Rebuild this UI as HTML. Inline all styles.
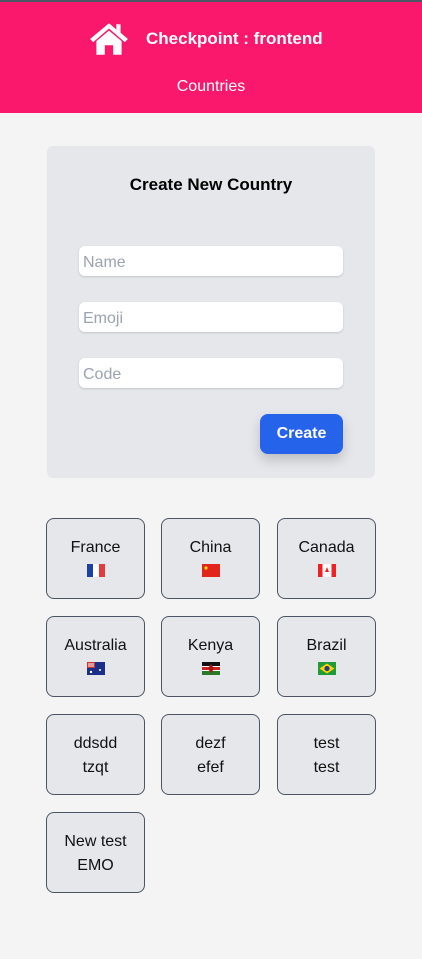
<!DOCTYPE html><html><head><style>
*{box-sizing:border-box;margin:0;padding:0}
body{width:422px;height:959px;background:#f4f4f5;font-family:"Liberation Sans",sans-serif;overflow:hidden;position:relative}
.hd{position:absolute;top:0;left:0;width:422px;height:113px;background:#f9186b;border-top:2px solid #4b5563}
.t{position:absolute;left:146px;top:27px;color:#fff;font-weight:bold;font-size:17px}
.c{position:absolute;left:0;width:422px;text-align:center;top:76px;color:#fff;font-size:16px}
.card{position:absolute;left:47px;top:146px;width:328px;height:332px;background:#e5e7eb;border-radius:6px}
.card h2{position:absolute;top:29px;width:100%;text-align:center;font-size:17px}
.in{position:absolute;left:32px;width:264px;height:30px;background:#fff;border-radius:6px;color:#9ca3af;font-size:16px;padding:8px 4px 0;box-shadow:0 1px 2px rgba(0,0,0,.15)}
.btn{position:absolute;left:213px;top:268px;width:83px;height:40px;background:#2563eb;color:#fff;border-radius:8px;font-weight:bold;font-size:16px;text-align:center;line-height:40px;box-shadow:0 6px 12px rgba(0,0,0,.18)}
.tile{position:absolute;width:99px;height:81px;border:1px solid #4b5563;border-radius:8px;background:#e5e7eb;text-align:center;font-size:16px;line-height:24px;padding-top:17px;color:#111}
.tile svg{display:block;margin:4px auto 0}
</style></head><body>
<div class="hd">
<svg style="position:absolute;left:88px;top:19px" width="42" height="36" viewBox="0 0 40 34"><path d="M20 2 L2 17 L5 20 L20 7 L35 20 L38 17 L31 11 V3 H27 V8 Z" fill="#fff"/><path d="M8 19 L20 9 L32 19 V32 H24 V23 H16 V32 H8 Z" fill="#fff"/></svg>
<div class="t">Checkpoint : frontend</div>
<div class="c">Countries</div></div>
<div class="card"><h2>Create New Country</h2>
<div class="in" style="top:100px">Name</div>
<div class="in" style="top:156px">Emoji</div>
<div class="in" style="top:212px">Code</div>
<div class="btn">Create</div></div>

<div class="tile" style="left:46px;top:518px">France<svg width="18" height="13"><rect width="6" height="13" fill="#1f3fa8"/><rect x="6" width="6" height="13" fill="#fff"/><rect x="12" width="6" height="13" fill="#e23b3b"/></svg></div>
<div class="tile" style="left:161px;top:518px">China<svg width="18" height="13"><rect width="18" height="13" fill="#e1251b"/><circle cx="4" cy="4" r="1.6" fill="#ffde00"/></svg></div>
<div class="tile" style="left:277px;top:518px">Canada<svg width="18" height="13"><rect width="18" height="13" fill="#fff"/><rect width="4.5" height="13" fill="#e22"/><rect x="13.5" width="4.5" height="13" fill="#e22"/><path d="M9 3 L11 8 H7 Z" fill="#e22"/></svg></div>
<div class="tile" style="left:46px;top:616px">Australia<svg width="18" height="13"><rect width="18" height="13" fill="#1a2f8a"/><rect width="8" height="6" fill="#c33"/><rect x="1" y="1" width="6" height="4" fill="#fff" opacity=".5"/><circle cx="13" cy="8" r="1" fill="#fff"/><circle cx="4" cy="10" r="1.2" fill="#fff"/></svg></div>
<div class="tile" style="left:161px;top:616px">Kenya<svg width="18" height="13"><rect width="18" height="4" fill="#111"/><rect y="4" width="18" height="1" fill="#fff"/><rect y="5" width="18" height="3" fill="#c22"/><rect y="8" width="18" height="1" fill="#fff"/><rect y="9" width="18" height="4" fill="#2a7a2a"/><ellipse cx="9" cy="6.5" rx="2" ry="4" fill="#a11"/></svg></div>
<div class="tile" style="left:277px;top:616px">Brazil<svg width="18" height="13"><rect width="18" height="13" fill="#1f9b3a"/><path d="M9 1.5 L16.5 6.5 L9 11.5 L1.5 6.5 Z" fill="#ffd400"/><circle cx="9" cy="6.5" r="2.6" fill="#1f3c8f"/></svg></div>
<div class="tile" style="left:46px;top:714px">ddsdd<br>tzqt</div>
<div class="tile" style="left:161px;top:714px">dezf<br>efef</div>
<div class="tile" style="left:277px;top:714px">test<br>test</div>
<div class="tile" style="left:46px;top:812px">New test<br>EMO</div>
</body></html>
